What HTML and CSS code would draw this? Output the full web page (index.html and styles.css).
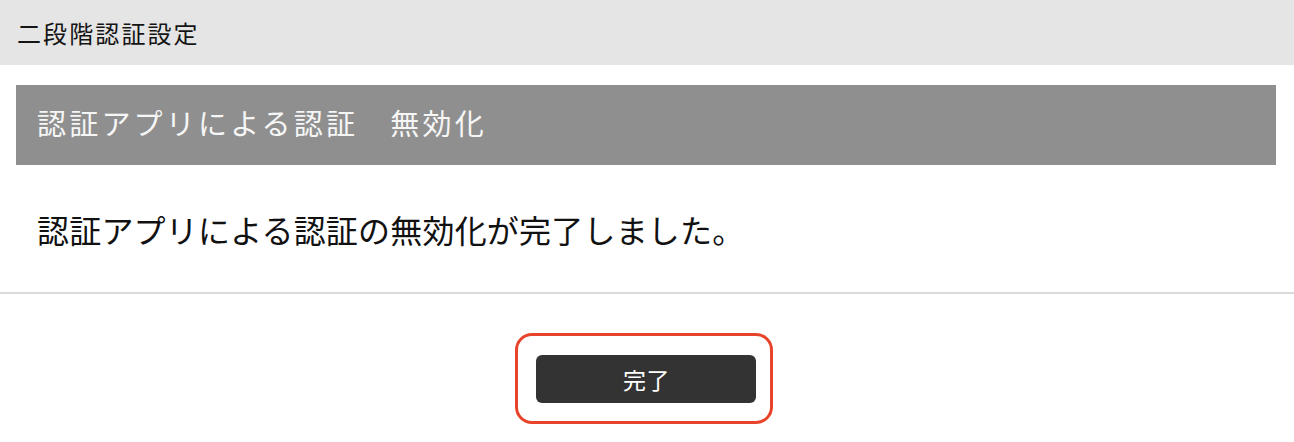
FILE: index.html
```html
<!DOCTYPE html>
<html lang="ja">
<head>
<meta charset="utf-8">
<title>二段階認証設定</title>
<link rel="stylesheet" href="styles.css">
</head>
<body>
  <header class="page-header">二段階認証設定</header>
  <main class="content">
    <h2 class="section-title">認証アプリによる認証　無効化</h2>
    <p class="message">認証アプリによる認証の無効化が完了しました。</p>
  </main>
  <footer class="actions">
    <div class="highlight">
      <button class="done-button" type="button">完了</button>
    </div>
  </footer>
</body>
</html>
```
FILE: styles.css
```css
html, body {
  margin: 0;
  padding: 0;
  background: #ffffff;
}

body {
  font-family: "Noto Sans CJK JP", "Noto Sans", sans-serif;
  color: #111111;
}

.page-header {
  height: 65px;
  background: #e5e5e5;
  display: flex;
  align-items: center;
  padding-left: 17px;
  font-size: 24px;
  letter-spacing: 2.1px;
  line-height: 1;
  color: #141414;
}

.content {
  border-bottom: 2px solid #dadada;
}

.section-title {
  margin: 20px 18px 0 16px;
  height: 80px;
  box-sizing: border-box;
  background: #8f8f8f;
  display: flex;
  align-items: center;
  padding: 0 0 6px 21px;
  font-size: 29px;
  font-weight: normal;
  letter-spacing: 3.2px;
  line-height: 1;
  color: #f6f6f6;
}

.message {
  margin: 0;
  height: 127px;
  box-sizing: border-box;
  display: flex;
  align-items: center;
  padding: 0 0 0 37px;
  font-size: 32px;
  letter-spacing: 0.2px;
  line-height: 1;
  color: #111111;
}

.actions {
  display: flex;
  justify-content: center;
  padding: 39px 7px 0 0;
}

.highlight {
  border: 3px solid #e8442b;
  border-radius: 17px;
  padding: 19px 14px 18px 18px;
}

.done-button {
  display: block;
  width: 220px;
  height: 48px;
  border: none;
  border-radius: 6px;
  background: #333333;
  color: #ffffff;
  font-family: "Noto Sans CJK JP", "Noto Sans", sans-serif;
  font-size: 23px;
  letter-spacing: 0.5px;
  line-height: 1;
  padding: 0 0 0 2px;
  cursor: pointer;
}
```
